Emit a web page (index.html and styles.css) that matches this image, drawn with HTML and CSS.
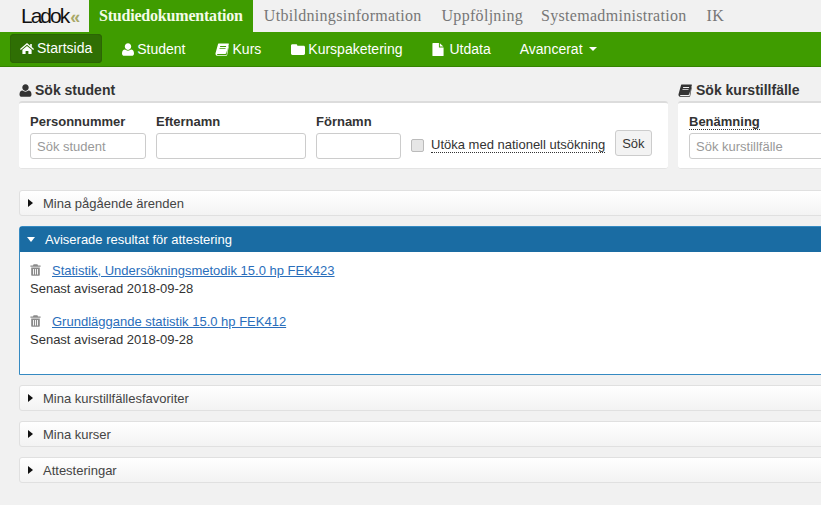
FILE: index.html
```html
<!DOCTYPE html>
<html lang="sv">
<head>
  <meta charset="UTF-8">
  <title>Ladok</title>
  <link rel="stylesheet" href="styles.css">
</head>
<body>
  <svg class="defs" width="0" height="0">
    <symbol id="i-home" viewBox="0 0 14 12"><path d="M7 0.5 L10.2 3.2 V1.4 H11.8 V4.6 L14 6.5 L13.2 7.4 L7 2.2 L0.8 7.4 L0 6.5 Z M2.4 7.2 L7 3.4 L11.6 7.2 V11.6 H8.4 V8.4 H5.6 V11.6 H2.4 Z"/></symbol>
    <symbol id="i-user" viewBox="0 0 12 13"><path d="M6 0.3 C7.9 0.3 9.2 1.8 9.2 3.6 C9.2 5.4 7.9 6.9 6 6.9 C4.1 6.9 2.8 5.4 2.8 3.6 C2.8 1.8 4.1 0.3 6 0.3 Z M3 6.6 C4.6 8 7.4 8 9 6.6 C10.8 6.8 12 8 12 10.4 C12 12 11 12.8 9.8 12.8 H2.2 C1 12.8 0 12 0 10.4 C0 8 1.2 6.8 3 6.6 Z"/></symbol>
    <symbol id="i-book" viewBox="0 0 14 13"><path d="M3.6 0.4 H13.2 C13.8 0.4 14 0.9 13.8 1.5 L11.3 10 C11.1 10.7 10.6 11 10 11 H2.6 C2.1 11 1.9 11.4 2.2 11.7 C2.4 11.9 2.7 11.9 3 11.9 H11.6 L13.2 3 L13.8 3.3 L12.2 12 C12.1 12.5 11.8 12.8 11.3 12.8 H2.6 C1.2 12.8 0.2 11.6 0.5 10.2 L3 1.2 C3.1 0.7 3.2 0.4 3.6 0.4 Z M5.2 3 L5 3.9 H11 L11.2 3 Z M4.6 5.2 L4.4 6.1 H10.4 L10.6 5.2 Z" fill-rule="evenodd"/></symbol>
    <symbol id="i-folder" viewBox="0 0 14 12"><path d="M1.4 0.8 H5 C5.8 0.8 6.2 1.2 6.4 2.2 H12.6 C13.4 2.2 14 2.8 14 3.6 V10 C14 10.8 13.4 11.4 12.6 11.4 H1.4 C0.6 11.4 0 10.8 0 10 V2.2 C0 1.4 0.6 0.8 1.4 0.8 Z"/></symbol>
    <symbol id="i-file" viewBox="0 0 12 14"><path d="M0.6 0 H7 V4.8 H12 V13.4 C12 13.8 11.8 14 11.4 14 H0.6 C0.2 14 0 13.8 0 13.4 V0.6 C0 0.2 0.2 0 0.6 0 Z M8 0.2 L11.8 3.8 H8 Z"/></symbol>
    <symbol id="i-trash" viewBox="0 0 11 12"><path d="M3.6 0.2 H7.4 L8 1.6 H10.6 V2.8 H0.4 V1.6 H3 Z M1.2 3.6 H9.8 V10.8 C9.8 11.4 9.4 11.8 8.8 11.8 H2.2 C1.6 11.8 1.2 11.4 1.2 10.8 Z M3 5 V10.4 H3.9 V5 Z M5.05 5 V10.4 H5.95 V5 Z M7.1 5 V10.4 H8 V5 Z" fill-rule="evenodd"/></symbol>
  </svg>

  <header class="topbar">
    <div class="logo">Ladok<span class="logo-mark">«</span></div>
    <a class="tab tab-active">Studiedokumentation</a>
    <a class="tab">Utbildningsinformation</a>
    <a class="tab tab-tight">Uppföljning</a>
    <a class="tab">Systemadministration</a>
    <a class="tab">IK</a>
  </header>

  <nav class="mainnav">
    <a class="navlink navlink-active"><svg class="ico"><use href="#i-home"/></svg>Startsida</a>
    <a class="navlink"><svg class="ico ico-user"><use href="#i-user"/></svg>Student</a>
    <a class="navlink"><svg class="ico ico-book"><use href="#i-book"/></svg>Kurs</a>
    <a class="navlink navlink-wide"><svg class="ico"><use href="#i-folder"/></svg>Kurspaketering</a>
    <a class="navlink navlink-wide"><svg class="ico ico-file"><use href="#i-file"/></svg>Utdata</a>
    <a class="navlink">Avancerat<span class="caret"></span></a>
  </nav>

  <main class="content">
    <div class="search-row">
      <section class="search search-student">
        <h2><svg class="ico"><use href="#i-user"/></svg>Sök student</h2>
        <form class="search-box">
          <div class="field">
            <label>Personnummer</label>
            <input class="w-pnr" type="text" placeholder="Sök student">
          </div>
          <div class="field">
            <label>Efternamn</label>
            <input class="w-efter" type="text">
          </div>
          <div class="field">
            <label>Förnamn</label>
            <input class="w-for" type="text">
          </div>
          <div class="check"><span class="checkbox"></span><span class="dotted">Utöka med nationell utsökning</span></div>
          <button type="button">Sök</button>
        </form>
      </section>
      <section class="search search-kurs">
        <h2><svg class="ico"><use href="#i-book"/></svg>Sök kurstillfälle</h2>
        <form class="search-box">
          <div class="field">
            <label><span class="dotted">Benämning</span></label>
            <input class="w-kurs" type="text" placeholder="Sök kurstillfälle">
          </div>
        </form>
      </section>
    </div>

    <div class="acc"><span class="arrow"></span>Mina pågående ärenden</div>

    <div class="acc-open">
      <div class="acc-head"><span class="arrow-down"></span>Aviserade resultat för attestering</div>
      <div class="acc-body">
        <div class="item">
          <div><svg class="ico trash"><use href="#i-trash"/></svg><a class="link">Statistik, Undersökningsmetodik 15.0 hp FEK423</a></div>
          <div>Senast aviserad 2018-09-28</div>
        </div>
        <div class="item">
          <div><svg class="ico trash"><use href="#i-trash"/></svg><a class="link">Grundläggande statistik 15.0 hp FEK412</a></div>
          <div>Senast aviserad 2018-09-28</div>
        </div>
      </div>
    </div>

    <div class="acc"><span class="arrow"></span>Mina kurstillfällesfavoriter</div>
    <div class="acc"><span class="arrow"></span>Mina kurser</div>
    <div class="acc"><span class="arrow"></span>Attesteringar</div>
  </main>
</body>
</html>
```

FILE: styles.css
```css
html, body {
  height: 100%;
  overflow: hidden;
}
body {
  margin: 0;
  background-color: #f1f1f1;
  color: #333;
  font-family: "Liberation Sans", Arial, sans-serif;
  font-size: 13px;
  line-height: 17px;
}
.defs {
  position: absolute;
}
.ico {
  fill: currentColor;
  flex: none;
}

/* top tabs */
.topbar {
  display: flex;
  height: 32px;
  font-family: "Liberation Serif", serif;
  font-size: 16px;
  letter-spacing: 0.3px;
}
.logo {
  width: 68px;
  padding-left: 21px;
  color: #111;
  font-family: "Liberation Sans", sans-serif;
  font-size: 21px;
  line-height: 32px;
  letter-spacing: -2px;
  white-space: nowrap;
}
.logo-mark {
  margin-left: 2px;
  color: #a8a868;
  font-size: 18px;
  font-weight: bold;
}
.tab {
  padding: 0 10px;
  color: #777;
  line-height: 32px;
}
.tab-tight {
  padding-right: 8px;
}
.tab-active {
  margin-right: 1px;
  background-color: #3f9c00;
  color: #f4fbe8;
  font-weight: bold;
  letter-spacing: -0.2px;
}

/* green menu */
.mainnav {
  display: flex;
  align-items: center;
  height: 34px;
  padding: 0 10px;
  background-color: #3f9c00;
  border-bottom: 1px solid #358300;
  font-size: 14px;
}
.navlink {
  display: flex;
  align-items: center;
  height: 29px;
  padding: 0 15px 0 14px;
  color: #fff;
}
.navlink-wide {
  margin-left: 1px;
}
.navlink .ico {
  width: 14px;
  height: 13px;
  margin-right: 3px;
}
.navlink .ico-user {
  width: 12px;
}
.navlink .ico-book {
  margin-right: 4px;
}
.navlink .ico-file {
  width: 12px;
  margin-right: 5px;
}
.navlink-active {
  margin: -1px 6px 0 0;
  padding: 0 10px;
  background-color: #2f6f04;
  border-radius: 4px;
  box-shadow: inset 0 0 0 1px #2c6505;
}
.caret {
  width: 0;
  height: 0;
  margin-left: 6px;
  border: 4px solid transparent;
  border-top-color: #fff;
  border-bottom: 0;
}

/* page body */
.content {
  width: 1100px;
  padding: 15px 0 0 19px;
}
.search-row {
  display: flex;
  gap: 10px;
  margin-bottom: 21px;
}
.search h2 {
  display: flex;
  align-items: center;
  margin: 0 0 2px;
  height: 17px;
  color: #333;
  font-size: 14px;
  font-weight: bold;
}
.search h2 .ico {
  width: 13px;
  height: 13px;
  margin-right: 3px;
}
.search-kurs h2 .ico {
  width: 14px;
  margin-right: 4px;
}
.search-student {
  width: 649px;
}
.search-kurs {
  width: 300px;
}
.search-box {
  display: flex;
  align-items: flex-end;
  height: 65px;
  padding: 0 15px 0 11px;
  background-color: #fff;
  border-top: 2px solid #dcdcdc;
  border-bottom: 1px solid #e4e4e4;
  border-radius: 3px;
}
.field {
  margin: 0 10px 9px 0;
}
.field label {
  display: block;
  margin-bottom: 3px;
  font-weight: bold;
}
.search-box input {
  display: block;
  box-sizing: border-box;
  height: 26px;
  padding: 0 6px;
  background: #fff;
  border: 1px solid #ccc;
  border-radius: 3px;
  font: 13px "Liberation Sans", sans-serif;
}
.search-box input::placeholder {
  color: #999;
}
.w-pnr { width: 116px; }
.w-efter { width: 150px; }
.w-for { width: 85px; }
.w-kurs { width: 200px; }
.check {
  display: flex;
  align-items: center;
  margin-bottom: 15px;
}
.checkbox {
  width: 11px;
  height: 11px;
  margin-right: 7px;
  background-color: #e6e6e6;
  border: 1px solid #bbb;
  border-radius: 2px;
}
.dotted {
  border-bottom: 1px dotted #333;
  line-height: 14px;
}
button {
  height: 26px;
  margin: 0 0 12px 10px;
  padding: 0 6px;
  background-color: #f3f3f3;
  border: 1px solid #ccc;
  border-radius: 3px;
  color: #333;
  font: 13px "Liberation Sans", sans-serif;
}

/* accordions */
.acc {
  display: flex;
  align-items: center;
  height: 24px;
  margin-bottom: 10px;
  padding-left: 8px;
  background: linear-gradient(#fff, #f3f3f3);
  border: 1px solid #e0e0e0;
  border-radius: 3px;
  color: #444;
}
.arrow {
  width: 0;
  height: 0;
  margin-right: 10px;
  border: 4px solid transparent;
  border-left: 5px solid #111;
  border-right: 0;
}
.acc-open {
  margin-bottom: 10px;
  border: 1px solid #358ac2;
  border-radius: 3px 3px 0 0;
  background-color: #fff;
}
.acc-head {
  display: flex;
  align-items: center;
  height: 25px;
  padding-left: 7px;
  background-color: #1a6ca3;
  color: #fff;
}
.arrow-down {
  width: 0;
  height: 0;
  margin-right: 10px;
  border: 4.5px solid transparent;
  border-top: 5px solid #fff;
  border-bottom: 0;
}
.acc-body {
  height: 113px;
  padding: 9px 10px 0;
}
.item {
  margin-bottom: 15px;
}
.item > div {
  height: 18px;
  display: flex;
  align-items: center;
}
.trash {
  width: 11px;
  height: 12px;
  margin-right: 11px;
  color: #8a8a8a;
}
.link {
  color: #2a6ebb;
  text-decoration: underline;
}
```
